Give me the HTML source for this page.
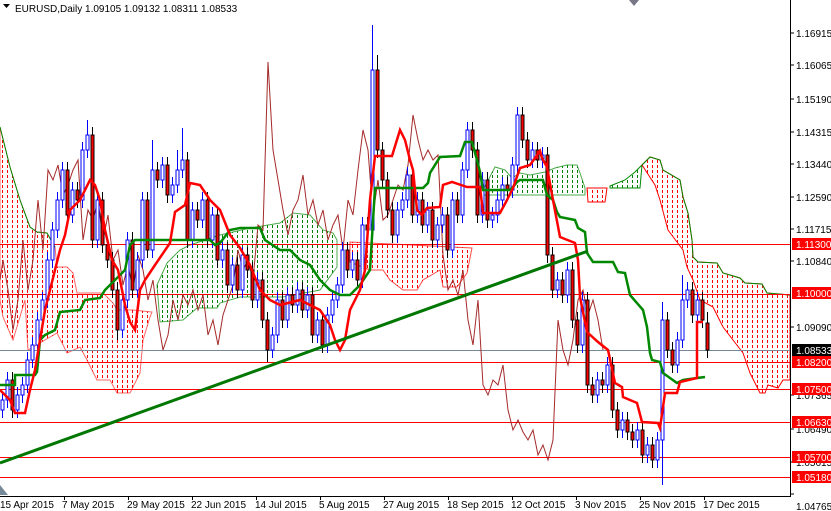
<!DOCTYPE html>
<html><head><meta charset="utf-8"><style>
html,body{margin:0;padding:0;background:#fff;width:831px;height:511px;overflow:hidden}
svg{display:block}
text{font-family:"Liberation Sans",sans-serif;font-size:10px}
</style></head><body>
<svg width="831" height="511" viewBox="0 0 831 511" xmlns="http://www.w3.org/2000/svg">
<defs>
<pattern id="rp" width="5" height="5" patternUnits="userSpaceOnUse"><rect x="2" y="0" width="1" height="3" fill="#ff0000"/></pattern>
<pattern id="gp" width="5" height="5" patternUnits="userSpaceOnUse"><rect x="2" y="0" width="1" height="3" fill="#008000"/></pattern>
<clipPath id="pc"><rect x="0" y="0" width="790" height="496"/></clipPath>
</defs>
<rect width="831" height="511" fill="#fff"/>
<g clip-path="url(#pc)">
<path d="M0,127 L10,167 L20,200 L30,227 L37,232 L47,233 L55,247 L57,267 L67,267 L73,273 L77,293 L103,293 L113,303 L117,310 L133,310 L152,312 L150,317 L143,340 L140,373 L130,393 L117,393 L110,380 L97,380 L87,360 L80,347 L67,353 L57,333 L28,350 L25,300 L13,340 L3,317 L0,300Z" fill="url(#rp)" stroke="#f00" stroke-width="1" stroke-opacity="0.6"/>
<path d="M0,127 L10,167 L20,200 L30,227 L37,232 L47,233 L55,247" fill="none" stroke="#080"/>
<path d="M157,285 L167,263 L180,250 L190,245 L205,240 L220,235 L250,228 L280,223 L293,213 L310,215 L323,230 L333,233 L337,240 L337,267 L320,290 L283,297 L253,297 L240,297 L220,303 L217,308 L197,308 L183,320 L160,322Z" fill="url(#gp)" stroke="#080" stroke-width="1" stroke-opacity="0.7"/>
<path d="M350,242 L472,248 L467,273 L457,287 L443,287 L440,270 L423,280 L417,290 L403,290 L390,280 L383,270 L370,270 L350,262Z" fill="url(#rp)" stroke="#f00" stroke-opacity="0.7"/>
<path d="M483,190 L495,167 L505,170 L512,178 L520,173 L530,175 L545,172 L555,168 L567,165 L577,165 L580,173 L585,188 L585,195 L483,195Z" fill="url(#gp)" stroke="#080" stroke-opacity="0.7"/>
<path d="M587,188 L607,188 L605,202 L588,202Z" fill="url(#rp)" stroke="#f00"/>
<path d="M610,186 L625,180 L635,172 L642,165 L640,188 L610,188Z" fill="url(#gp)" stroke="#080"/>
<path d="M642,165 L650,157 L660,160 L663,170 L680,180 L683,197 L688,213 L692,240 L693,257 L698,262 L717,263 L723,273 L740,278 L745,283 L762,284 L767,293 L790,295 L790,380 L783,380 L778,388 L768,385 L765,393 L760,393 L750,373 L743,353 L733,340 L723,327 L713,307 L700,300 L693,280 L687,267 L683,250 L668,230 L660,200 L655,185Z" fill="url(#rp)" stroke="#f00" stroke-width="1"/>
<path d="M642,165 L650,157 L660,160 L663,170 L680,180 L683,197 L688,213 L692,240 L693,257 L698,262 L717,263 L723,273 L740,278 L745,283 L762,284 L767,293 L790,295" fill="none" stroke="#080"/>
<g stroke="#f00" stroke-width="1">
<line x1="0" y1="244.5" x2="790" y2="244.5"/><line x1="0" y1="294.5" x2="790" y2="294.5"/><line x1="0" y1="362.5" x2="790" y2="362.5"/><line x1="0" y1="389.5" x2="790" y2="389.5"/><line x1="0" y1="422.5" x2="790" y2="422.5"/><line x1="0" y1="457.5" x2="790" y2="457.5"/><line x1="0" y1="477.5" x2="790" y2="477.5"/>
</g>
<line x1="0" y1="350.5" x2="790" y2="350.5" stroke="#789"/>
<polyline fill="none" stroke="#a52a2a" stroke-width="1" points="0,280 3,260 8,290 13,330 18,300 23,240 28,290 33,260 38,200 43,250 48,170 53,180 58,165 63,195 68,185 73,170 78,160 83,240 88,210 93,220 98,200 103,240 108,215 113,260 118,250 123,285 128,265 133,290 138,255 143,270 148,300 153,280 158,320 163,350 168,335 173,300 178,320 183,295 188,305 193,290 198,310 203,295 208,335 213,320 218,345 223,315 228,300 233,285 238,250 243,270 248,260 253,280 258,225 263,230 268,62 273,150 278,180 283,210 288,235 293,210 298,200 303,175 308,215 313,200 318,225 323,210 328,240 333,225 338,215 343,250 348,200 353,215 358,170 363,130 368,150 373,215 378,180 383,220 388,215 393,200 398,185 403,190 408,165 413,115 418,140 423,160 428,150 433,160 438,155 443,255 448,290 453,280 458,295 463,270 468,320 473,345 478,300 483,385 488,395 493,380 498,385 503,365 508,410 513,430 518,420 523,432 528,440 533,430 538,455 543,445 548,460 553,440 558,320 563,350 568,365 573,340 578,300 583,290 588,315 593,300 598,320 603,350"/>
<path stroke="#00f" fill="none" d="M2.5,392V418M7.5,372V408M17.5,387V418M22.5,377V403M27.5,352V393M32.5,337V368M37.5,312V353M42.5,292V328M47.5,252V308M52.5,222V268M57.5,192V238M62.5,162V208M72.5,182V223M82.5,142V208M87.5,120V158M97.5,192V248M122.5,292V338M127.5,232V308M137.5,252V298M142.5,192V268M152.5,140V258M162.5,157V188M172.5,177V203M177.5,150V193M182.5,128V178M192.5,202V248M202.5,192V228M212.5,207V248M222.5,242V268M232.5,257V293M242.5,247V298M257.5,272V308M272.5,327V358M277.5,292V343M287.5,287V328M297.5,282V313M307.5,287V318M317.5,312V343M327.5,307V353M332.5,292V323M337.5,277V308M342.5,242V293M352.5,252V278M362.5,217V288M372.5,25V238M397.5,202V243M402.5,192V218M407.5,167V208M417.5,192V223M427.5,202V233M437.5,217V248M442.5,207V233M452.5,192V258M462.5,162V223M467.5,122V178M482.5,172V223M492.5,207V228M497.5,192V223M502.5,177V208M512.5,157V198M517.5,107V173M532.5,142V168M542.5,147V168M557.5,272V298M567.5,262V303M582.5,292V353M597.5,372V403M607.5,357V393M622.5,412V438M637.5,422V448M647.5,437V463M657.5,432V468M662.5,302V485M677.5,332V373M682.5,275V348M687.5,282V308M697.5,292V323"/>
<path stroke="#000" fill="none" d="M12.5,372V418M67.5,162V223M77.5,182V208M92.5,127V248M102.5,192V253M107.5,237V268M112.5,252V298M117.5,282V340M132.5,232V298M147.5,192V258M157.5,162V188M167.5,157V203M187.5,152V248M197.5,202V228M207.5,192V248M217.5,207V268M227.5,242V293M237.5,257V298M247.5,247V278M252.5,262V308M262.5,272V328M267.5,312V362M282.5,292V328M292.5,287V313M302.5,282V318M312.5,287V343M322.5,312V353M347.5,242V278M357.5,252V288M367.5,217V238M377.5,55V158M382.5,142V188M387.5,172V218M392.5,202V243M412.5,167V223M422.5,192V233M432.5,202V248M447.5,207V258M457.5,192V223M472.5,122V158M477.5,142V223M487.5,172V228M507.5,177V198M522.5,107V148M527.5,132V168M537.5,142V168M547.5,147V263M552.5,247V298M562.5,272V303M572.5,262V328M577.5,312V353M587.5,292V393M592.5,377V403M602.5,372V393M612.5,357V418M617.5,402V438M627.5,412V440M632.5,424V448M642.5,422V463M652.5,437V468M667.5,312V358M672.5,342V373M692.5,282V323M702.5,292V328M707.5,312V358"/>
<path stroke="#00f" fill="#fff" d="M1,400h3V410h-3ZM6,380h3V400h-3ZM16,395h3V410h-3ZM21,385h3V395h-3ZM26,360h3V385h-3ZM31,345h3V360h-3ZM36,320h3V345h-3ZM41,300h3V320h-3ZM46,260h3V300h-3ZM51,230h3V260h-3ZM56,200h3V230h-3ZM61,170h3V200h-3ZM71,190h3V215h-3ZM81,150h3V200h-3ZM86,135h3V150h-3ZM96,200h3V240h-3ZM121,300h3V330h-3ZM126,240h3V300h-3ZM136,260h3V290h-3ZM141,200h3V260h-3ZM151,170h3V250h-3ZM161,165h3V180h-3ZM171,185h3V195h-3ZM176,170h3V185h-3ZM181,160h3V170h-3ZM191,210h3V240h-3ZM201,200h3V220h-3ZM211,215h3V240h-3ZM221,250h3V260h-3ZM231,265h3V285h-3ZM241,255h3V290h-3ZM256,280h3V300h-3ZM271,335h3V350h-3ZM276,300h3V335h-3ZM286,295h3V320h-3ZM296,290h3V305h-3ZM306,295h3V310h-3ZM316,320h3V335h-3ZM326,315h3V345h-3ZM331,300h3V315h-3ZM336,285h3V300h-3ZM341,250h3V285h-3ZM351,260h3V270h-3ZM361,225h3V280h-3ZM371,70h3V230h-3ZM396,210h3V235h-3ZM401,200h3V210h-3ZM406,175h3V200h-3ZM416,200h3V215h-3ZM426,210h3V225h-3ZM436,225h3V240h-3ZM441,215h3V225h-3ZM451,200h3V250h-3ZM461,170h3V215h-3ZM466,130h3V170h-3ZM481,180h3V215h-3ZM491,215h3V220h-3ZM496,200h3V215h-3ZM501,185h3V200h-3ZM511,165h3V190h-3ZM516,115h3V165h-3ZM531,150h3V160h-3ZM541,155h3V160h-3ZM556,280h3V290h-3ZM566,270h3V295h-3ZM581,300h3V345h-3ZM596,380h3V395h-3ZM606,365h3V385h-3ZM621,420h3V430h-3ZM636,430h3V440h-3ZM646,445h3V455h-3ZM656,440h3V460h-3ZM661,320h3V440h-3ZM676,340h3V365h-3ZM681,300h3V340h-3ZM686,290h3V300h-3ZM696,300h3V315h-3Z"/>
<path stroke="#000" fill="#f00" d="M11,380h3V410h-3ZM66,170h3V215h-3ZM76,190h3V200h-3ZM91,135h3V240h-3ZM101,200h3V245h-3ZM106,245h3V260h-3ZM111,260h3V290h-3ZM116,290h3V330h-3ZM131,240h3V290h-3ZM146,200h3V250h-3ZM156,170h3V180h-3ZM166,165h3V195h-3ZM186,160h3V240h-3ZM196,210h3V220h-3ZM206,200h3V240h-3ZM216,215h3V260h-3ZM226,250h3V285h-3ZM236,265h3V290h-3ZM246,255h3V270h-3ZM251,270h3V300h-3ZM261,280h3V320h-3ZM266,320h3V350h-3ZM281,300h3V320h-3ZM291,295h3V305h-3ZM301,290h3V310h-3ZM311,295h3V335h-3ZM321,320h3V345h-3ZM346,250h3V270h-3ZM356,260h3V280h-3ZM366,225h3V230h-3ZM376,70h3V150h-3ZM381,150h3V180h-3ZM386,180h3V210h-3ZM391,210h3V235h-3ZM411,175h3V215h-3ZM421,200h3V225h-3ZM431,210h3V240h-3ZM446,215h3V250h-3ZM456,200h3V215h-3ZM471,130h3V150h-3ZM476,150h3V215h-3ZM486,180h3V220h-3ZM506,185h3V190h-3ZM521,115h3V140h-3ZM526,140h3V160h-3ZM536,150h3V160h-3ZM546,155h3V255h-3ZM551,255h3V290h-3ZM561,280h3V295h-3ZM571,270h3V320h-3ZM576,320h3V345h-3ZM586,300h3V385h-3ZM591,385h3V395h-3ZM601,380h3V385h-3ZM611,365h3V410h-3ZM616,410h3V430h-3ZM626,420h3V432h-3ZM631,432h3V440h-3ZM641,430h3V455h-3ZM651,445h3V460h-3ZM666,320h3V350h-3ZM671,350h3V365h-3ZM691,290h3V315h-3ZM701,300h3V320h-3ZM706,323h3V350h-3Z"/>
<polyline fill="none" stroke="#080" stroke-width="2.5" points="0,385 15,385 15,375 35,375 37,372 40,340 45,335 55,330 60,312 80,310 85,300 100,298 105,290 125,270 130,245 135,240 195,240 200,240 210,240 215,245 220,243 230,230 240,228 260,228 265,240 280,250 290,250 300,260 310,265 320,280 330,290 340,295 350,295 360,285 370,270 375,188 423,188 428,183 430,173 440,157 460,156 465,142 472,142 477,160 480,172 483,190 510,190 513,187 517,182 520,180 543,180 547,195 553,200 557,212 560,217 575,220 578,228 585,232 587,253 593,262 613,262 618,272 625,273 630,295 643,310 647,327 650,353 652,360 660,362 663,373 677,383 683,380 697,378 705,377"/>
<polyline fill="none" stroke="#f00" stroke-width="2.5" points="0,390 10,400 15,413 25,413 30,390 35,370 40,340 45,310 55,270 60,250 65,235 70,210 80,200 90,180 95,185 100,200 105,230 112,260 118,270 125,305 130,322 135,330 140,290 145,280 155,265 170,243 175,212 185,205 190,183 200,185 210,200 220,210 230,235 240,248 250,265 260,290 270,300 280,305 300,300 310,305 320,310 330,325 335,340 340,350 345,340 350,310 355,300 360,290 365,270 370,200 375,156 392,156 400,130 405,140 410,160 413,170 417,210 422,215 427,208 440,207 443,185 452,182 467,187 480,187 483,213 500,213 507,200 513,188 520,168 530,165 540,151 542,158 547,167 553,200 560,237 575,243 578,260 580,297 587,332 598,342 608,350 615,383 622,387 623,397 637,403 642,422 658,423 660,428 665,393 677,393 680,382 697,378 697,322 703,322"/>
<line x1="0" y1="463" x2="588" y2="251" stroke="#070" stroke-width="3"/>
</g>
<line x1="790.5" y1="0" x2="790.5" y2="497" stroke="#000"/>
<line x1="0" y1="496.5" x2="791" y2="496.5" stroke="#000"/>
<g stroke="#000">
<path d="M790,33h4M790,65h4M790,99h4M790,132h4M790,164h4M790,197h4M790,229h4M790,261h4M790,327h4M790,395h4M790,429h4M790,462h4M790,494h4"/>
<path d="M64.5,496v4M128.5,496v4M192.5,496v4M256.5,496v4M320.5,496v4M384.5,496v4M448.5,496v4M512.5,496v4M576.5,496v4M640.5,496v4M704.5,496v4"/>
</g>
<g fill="#000">
<text x="796" y="37">1.16915</text><text x="796" y="69">1.16065</text><text x="796" y="103">1.15190</text><text x="796" y="136">1.14315</text><text x="796" y="168">1.13440</text><text x="796" y="201">1.12590</text><text x="796" y="233">1.11715</text><text x="796" y="265">1.10840</text><text x="796" y="331">1.09090</text><text x="796" y="399">1.07365</text><text x="796" y="433">1.06490</text><text x="796" y="466">1.05615</text><text x="796" y="510">1.04765</text>
</g>
<g>
<rect x="792" y="238" width="39" height="12" fill="#f00"/><text x="796" y="248" fill="#fff">1.11300</text>
<rect x="792" y="287" width="39" height="12" fill="#f00"/><text x="796" y="297" fill="#fff">1.10000</text>
<rect x="792" y="344" width="39" height="12" fill="#000"/><text x="796" y="354" fill="#fff">1.08533</text>
<rect x="792" y="356" width="39" height="12" fill="#f00"/><text x="796" y="366" fill="#fff">1.08200</text>
<rect x="792" y="383" width="39" height="12" fill="#f00"/><text x="796" y="393" fill="#fff">1.07500</text>
<rect x="792" y="416" width="39" height="12" fill="#f00"/><text x="796" y="426" fill="#fff">1.06630</text>
<rect x="792" y="451" width="39" height="12" fill="#f00"/><text x="796" y="461" fill="#fff">1.05700</text>
<rect x="792" y="471" width="39" height="12" fill="#f00"/><text x="796" y="481" fill="#fff">1.05180</text>
</g>
<g fill="#000">
<text x="0" y="508">15 Apr 2015</text><text x="62" y="508">7 May 2015</text><text x="127" y="508">29 May 2015</text><text x="191" y="508">22 Jun 2015</text><text x="255" y="508">14 Jul 2015</text><text x="319" y="508">5 Aug 2015</text><text x="383" y="508">27 Aug 2015</text><text x="447" y="508">18 Sep 2015</text><text x="511" y="508">12 Oct 2015</text><text x="575" y="508">3 Nov 2015</text><text x="639" y="508">25 Nov 2015</text><text x="703" y="508">17 Dec 2015</text>
</g>
<path d="M3,4h7l-3.5,4z" fill="#000"/>
<text x="15" y="12" fill="#000">EURUSD,Daily  1.09105 1.09132 1.08311 1.08533</text>
<path d="M629,0h10l-5,6z" fill="#778"/>
<path d="M0,495v-10l8,10z" fill="#789"/>
</svg>
</body></html>
